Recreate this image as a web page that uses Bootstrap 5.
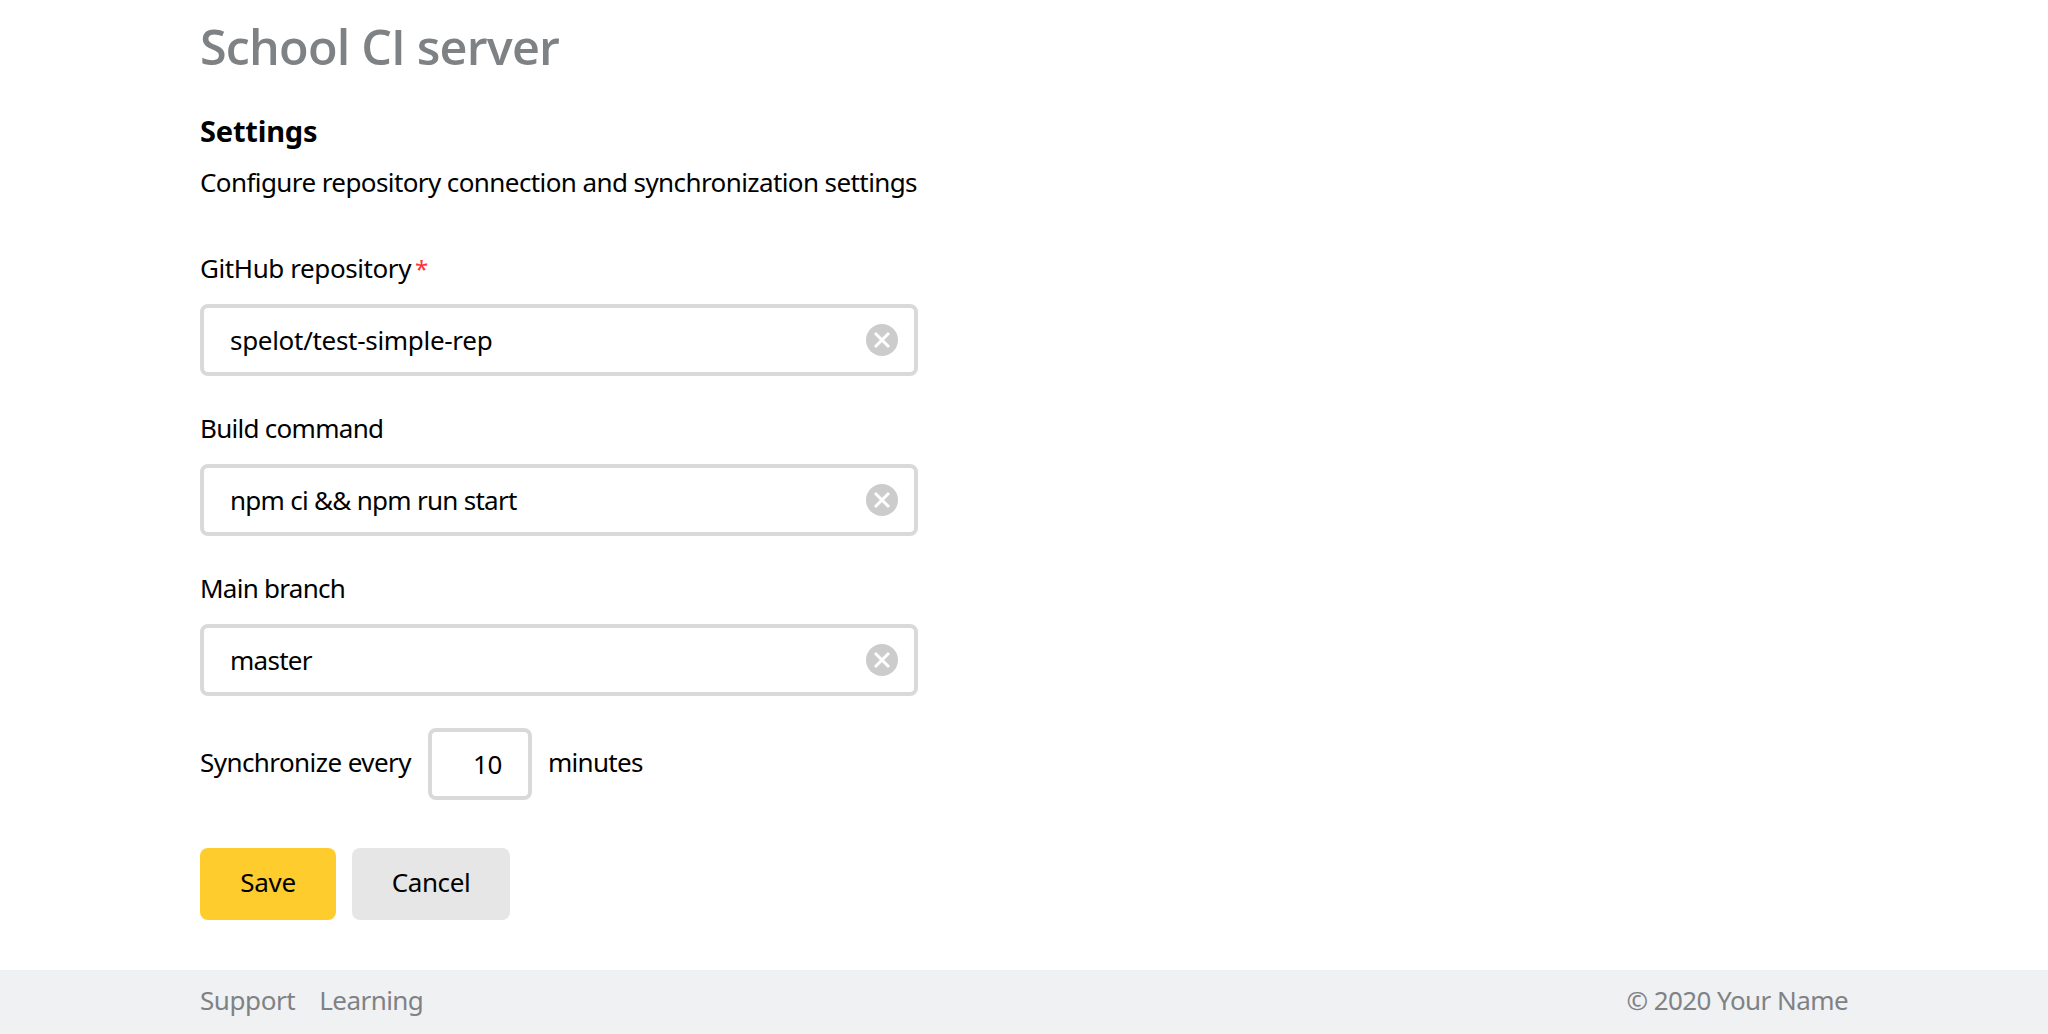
<!DOCTYPE html>
<html lang="en">
<head>
<meta charset="utf-8">
<title>School CI server</title>
<link href="https://cdn.jsdelivr.net/npm/bootstrap@5.3.0/dist/css/bootstrap.min.css" rel="stylesheet">
<style>
body{font-family:"Noto Sans","Open Sans",sans-serif;font-size:26px;line-height:40px;color:#000;background:#fff}
.page-pad{padding-left:200px;padding-right:200px}
.site-title{font-family:"Open Sans","Noto Sans",sans-serif;font-size:48.5px;line-height:60px;font-weight:600;letter-spacing:-.82px;color:#7f8285;margin-top:16px;margin-bottom:37px}
.page-title{font-size:29px;line-height:36px;font-weight:700;letter-spacing:-.2px;margin-bottom:13px}
.intro{margin-bottom:46px;letter-spacing:-.59px}
.settings-form{width:718px}
.field-group{margin-bottom:32px}
.field-group .form-label{margin-bottom:16px}
.form-control.ci-input{height:72px;border:4px solid #d9d9d9;border-radius:8px;padding:0 26px;font-size:26px;line-height:40px;color:#000}
.clear-btn{right:20px;top:20px;width:32px;height:32px}
.sync-row{height:72px}
.sync-label{width:212px;white-space:nowrap}
.form-control.sync-input{width:104px;text-align:right;margin:0 16px}
.btn.ci-btn{height:72px;border:0;border-radius:8px;padding:0 0 4px;font-size:26px;line-height:40px;color:#000}
.btn-save{width:136px;background:#ffcc2e}
.btn-cancel{width:158px;background:#e6e6e6}
.required-star{color:#ff3333;margin-left:4px;font-size:24px;line-height:1}
.site-footer{height:64px;background:#f0f1f3;color:#7f8285;padding-bottom:4px}
.site-footer a{color:inherit}
/* tracking steps */
.track-1{letter-spacing:-.3px}
.track-2{letter-spacing:-.41px}
.track-3{letter-spacing:-.57px}
.track-4{letter-spacing:-.72px}
</style>
<script src="https://cdn.jsdelivr.net/npm/bootstrap@5.3.0/dist/js/bootstrap.bundle.min.js"></script>
</head>
<body class="d-flex flex-column vh-100 overflow-hidden">
<header class="page-pad"><h1 class="site-title">School CI server</h1></header>
<main class="page-pad flex-grow-1">
<h2 class="page-title">Settings</h2>
<p class="intro">Configure repository connection and synchronization settings</p>
<form class="settings-form">
<div class="field-group">
<label class="form-label d-block" for="repo"><span class="track-2">GitHub repository</span><span class="required-star">*</span></label>
<div class="position-relative"><input id="repo" class="form-control ci-input track-1" value="spelot/test-simple-rep"><svg class="clear-btn position-absolute" viewBox="0 0 32 32"><circle cx="16" cy="16" r="16" fill="#ccc"/><path d="M9 9l14 14M23 9L9 23" stroke="#fff" stroke-width="3"/></svg></div>
</div>
<div class="field-group">
<label class="form-label d-block track-4" for="build">Build command</label>
<div class="position-relative"><input id="build" class="form-control ci-input track-4" value="npm ci &amp;&amp; npm run start"><svg class="clear-btn position-absolute" viewBox="0 0 32 32"><circle cx="16" cy="16" r="16" fill="#ccc"/><path d="M9 9l14 14M23 9L9 23" stroke="#fff" stroke-width="3"/></svg></div>
</div>
<div class="field-group">
<label class="form-label d-block track-4" for="branch">Main branch</label>
<div class="position-relative"><input id="branch" class="form-control ci-input track-4" value="master"><svg class="clear-btn position-absolute" viewBox="0 0 32 32"><circle cx="16" cy="16" r="16" fill="#ccc"/><path d="M9 9l14 14M23 9L9 23" stroke="#fff" stroke-width="3"/></svg></div>
</div>
<div class="sync-row d-flex align-items-center mb-5">
<label class="sync-label pb-1 track-3" for="sync">Synchronize every</label>
<input id="sync" class="form-control ci-input sync-input track-2" value="10">
<span class="pb-1 track-4">minutes</span>
</div>
<div class="d-flex gap-3">
<button type="button" class="btn ci-btn btn-save track-1">Save</button>
<button type="button" class="btn ci-btn btn-cancel track-2">Cancel</button>
</div>
</form>
</main>
<footer class="site-footer page-pad d-flex align-items-center justify-content-between">
<nav class="d-flex gap-4"><a class="text-decoration-none track-2" href="#">Support</a><a class="text-decoration-none track-3" href="#">Learning</a></nav>
<span class="track-3">© 2020 Your Name</span>
</footer>
</body>
</html>
